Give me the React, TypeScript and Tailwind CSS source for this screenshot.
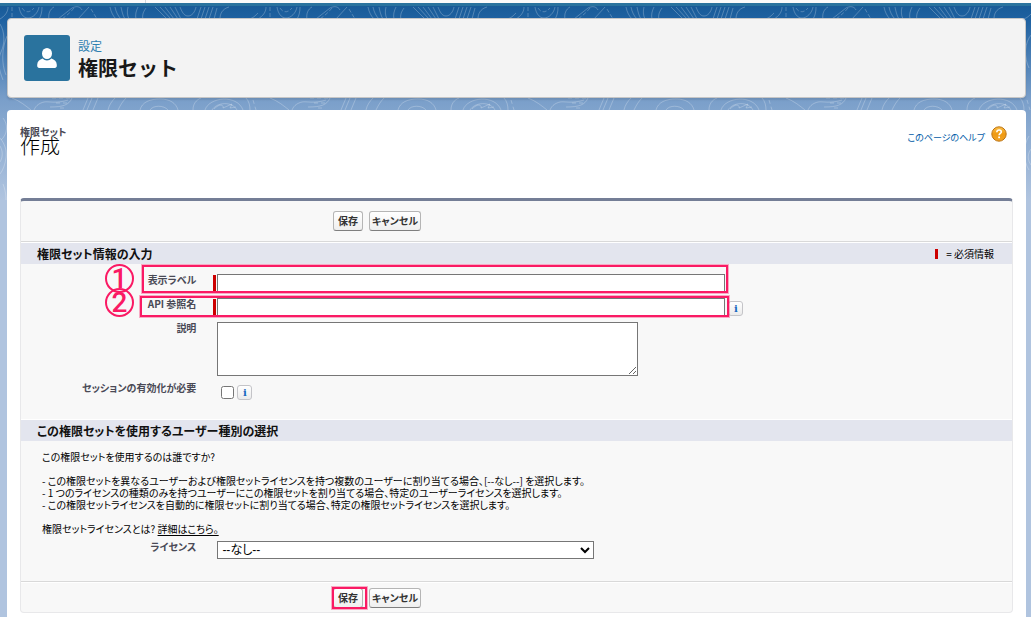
import { useState } from "react";
import type { ReactNode } from "react";
import clsx from "clsx";

const highlight =
  "pointer-events-none absolute border-2 border-[#fa1a64] ring-1 ring-[#fa1a64]/35";

const stepMark =
  "pointer-events-none absolute -top-2 left-[84px] flex h-[29px] w-[29px] items-center justify-center rounded-full border-2 border-[#fa1a64] font-['Roboto',sans-serif] text-[28px] leading-6 font-medium text-[#fa1a64]";

function Topography() {
  return (
    <svg
      className="absolute inset-0 h-full w-full"
      aria-hidden="true"
      fill="none"
    >
      <defs>
        <pattern
          id="topo"
          width="258"
          height="240"
          patternUnits="userSpaceOnUse"
        >
          <g stroke="#fff" strokeOpacity="0.24" strokeWidth="1" fill="none">
            <path d="M8 1C8 6 5 10 0 13M42 1c0 5-1 9-3 12M19 1c1 6 4 11 9 11s10-5 11-11M54 1c-4 2-6 7-5 12" />
            <path
              d="M12 1v12M22 2c3 5 8 5 12 0M74 2c-4 5-8 8-12 11M91 3l6 10"
              strokeDasharray="4 2"
            />
            <path d="M58 13 72 2c4-2 8-2 10 2M78 13 89 1M110 1c1 5 3 9 6 12M115 1c1 5 3 9 6 12M121 1c1 5 2 9 4 12M128 1c-1 4-1 8 1 12M138 1c-2 4-3 8-2 12M146 2c-3 4-4 8-3 11" />
            <path d="M155 1l12 12M160 1l11 12M165 1l9 12M170 1l8 12M175 1l6 12M180 1c2 5 4 9 8 9s7-4 8-9M201 1l-4 12M205 1l-4 12M209 1l-4 12M213 1l-4 12M217 2l-3 11M229 1c-7 2-9 7-9 12M258 7c-4 4-6 6-11 6" />
            <path d="M0 18c5 8 5 20 1 28-4 9-2 18 2 28M7 30c-5 12-6 27-1 39M3 112c5 6 5 16-2 22" />
            <path d="M12 92c8 3 14 8 19 12M34 104c2-5 6-7 10-8s12 2 24-2M72 92c-3 7-9 9-22 9M88 92l-5 12M92 92l-5 12M98 92l-5 12M115 92c-3 3-6 7-7 12M126 92c-4 4-6 8-8 12" />
            <path d="M140 104c2-8 10-11 20-11s16 4 18 11M150 104c3-5 14-5 18 0M193 104c0-6 3-10 8-12M205 104c4-13 32-16 38 0M212 104c5-8 20-9 25 0M214 103c6-6 10-4 9-1l9-4-2 4 6-1M246 92c3 3 4 8 4 12" />
            <path
              d="M52 92h19M56 97h13M60 102h6M253 94l3 10"
              strokeDasharray="4 3"
            />
            <path d="M0 132c5 6 7 13 6 20s-3 12-6 16M0 140c3 5 3 11 0 16M3 178c3 8 4 16 2 24" />
            <path d="M258 28c-8 8-8 24-3 34M255 130c-6 9-6 25 0 34M258 142c-5 5-5 13 0 18" />
          </g>
        </pattern>
      </defs>
      <rect width="100%" height="194" fill="url(#topo)" />
    </svg>
  );
}

function UserIcon() {
  return (
    <svg viewBox="0 0 46 46" className="h-[46px] w-[46px]" aria-hidden="true">
      <rect width="46" height="46" rx="3" fill="#2a739e" />
      <ellipse cx="23" cy="18.500" rx="5" ry="5.600" fill="#fff" />
      <path
        fill="#fff"
        d="M18.600 23.600c1.200 1.300 2.700 2 4.400 2s3.200-.7 4.400-2c3 1 5.400 3 5.400 6.100v1.100c0 1.300-.8 2.100-2 2.100H15.200c-1.200 0-2-.8-2-2.100v-1.100c0-3.100 2.400-5.100 5.400-6.100z"
      />
    </svg>
  );
}

function HelpIcon() {
  return (
    <svg viewBox="0 0 16 16" className="h-4 w-4" aria-hidden="true">
      <defs>
        <linearGradient id="help" x1="0" y1="0" x2="0" y2="1">
          <stop offset="0" stopColor="#fbc04a" />
          <stop offset="0.5" stopColor="#ef9a12" />
          <stop offset="1" stopColor="#f3a426" />
        </linearGradient>
      </defs>
      <circle cx="8" cy="8" r="7.200" fill="url(#help)" stroke="#bd7413" />
      <path
        d="M5.800 6.200C5.900 4.700 6.900 4 8.100 4c1.300 0 2.200.8 2.200 1.900 0 1.500-2.200 1.700-2.200 3.400"
        fill="none"
        stroke="#fff"
        strokeWidth="1.600"
      />
      <rect x="7.200" y="10.500" width="1.800" height="1.700" fill="#fff" />
    </svg>
  );
}

function InfoButton({ className }: { className?: string }) {
  return (
    <button
      type="button"
      className={clsx(
        "flex h-[15px] w-[15px] items-center justify-center rounded-[3px] border border-[#c4c4c8] bg-linear-to-b from-white to-[#ebebeb] font-['DejaVu_Serif',serif] text-[10px] leading-none font-bold text-[#1769c0]",
        className
      )}
    >
      i
    </button>
  );
}

function FormButton({ children }: { children: ReactNode }) {
  return (
    <button
      type="button"
      className="h-5 min-w-[30px] rounded-[3px] border border-[#b5b5b5] border-b-[#7f7f7f] bg-linear-to-b from-white to-[#efefef] px-0.5 text-[10px] leading-4 font-bold text-[#333]"
    >
      {children}
    </button>
  );
}

function SectionHeader({
  title,
  children,
}: {
  title: string;
  children?: ReactNode;
}) {
  return (
    <div className="flex h-[22px] items-center justify-between border-t border-white bg-[#e3e5ee] pr-[18px] pl-4">
      <h3 className="text-[12px] leading-4 font-bold text-[#111]">{title}</h3>
      {children}
    </div>
  );
}

function FormRow({
  id,
  label,
  className,
  children,
}: {
  id: string;
  label: string;
  className?: string;
  children: ReactNode;
}) {
  return (
    <div className={clsx("relative flex", className)}>
      <label
        htmlFor={id}
        className="w-[18%] shrink-0 pr-[3px] text-right text-[10px] leading-4 font-bold text-[#4a4a56]"
      >
        {label}
      </label>
      <div className="flex flex-1 items-start pt-0.5 pl-[14px]">{children}</div>
    </div>
  );
}

export default function App() {
  const [label, setLabel] = useState("");
  const [apiName, setApiName] = useState("");
  const [description, setDescription] = useState("");
  const [session, setSession] = useState(false);

  return (
    <div className="flex min-h-screen flex-col font-['Noto_Sans_CJK_JP',sans-serif] text-black">
      <div className="h-[3px] bg-[#fafafa]">
        <div className="h-full w-[146px] border-r border-gray-300"></div>
      </div>
      <div className="h-[3px] bg-[#2a739e]"></div>

      <div className="relative flex flex-1 flex-col bg-[#b0c4df] bg-[linear-gradient(#195b98_0px,#1f62a2_15px,#7a9fca_94px,#b0c4df_194px)] pt-3 pr-[5px] pl-[7px]">
        <Topography />
        <header className="relative flex h-20 items-center gap-2 rounded border border-[#c6c6c6] bg-[#f3f3f3] px-4 shadow-[0_2px_2px_rgba(0,0,0,0.1)]">
          <UserIcon />
          <div>
            <p className="text-[12px] leading-5 text-[#2e80b0]">設定</p>
            <h1 className="text-[20px] leading-6 font-bold text-[#181818]">
              権限セット
            </h1>
          </div>
        </header>

        <main className="relative mt-3 flex-1 rounded-t bg-white px-[13px] pt-4 pb-1 [font-feature-settings:'palt']">
          <div className="mb-11 flex items-start justify-between pr-1.5">
            <div>
              <p className="text-[10px] leading-3 font-bold text-[#4a4a56]">
                権限セット
              </p>
              <h2 className="text-[20px] leading-4 font-light">作成</h2>
            </div>
            <a
              href="#help"
              className="flex items-start gap-1.5 text-[9px] text-[#015ba7]"
            >
              <span className="pt-1 leading-4">このページのヘルプ</span>
              <HelpIcon />
            </a>
          </div>

          <form className="rounded border border-t-[3px] border-[#e8e8ea] border-t-[#747e96] bg-[#f8f8f8]">
            <div className="flex gap-1.5 border-b border-[#d9d9d9] py-2.5 pl-[312px]">
              <FormButton>保存</FormButton>
              <FormButton>キャンセル</FormButton>
            </div>

            <SectionHeader title="権限セット情報の入力">
              <p className="flex items-center gap-2 text-[10px] leading-4">
                <span className="h-2.5 w-[3px] bg-[#c00]"></span>= 必須情報
              </p>
            </SectionHeader>

            <div className="pt-2">
              <FormRow id="label" label="表示ラベル" className="h-6">
                <span className="mt-px mr-px h-4 w-[3px] bg-[#c00]"></span>
                <input
                  id="label"
                  type="text"
                  value={label}
                  onChange={(e) => setLabel(e.target.value)}
                  className="h-[18px] w-[508px] border border-[#767676] bg-white px-1 text-[12px]"
                />
                <span
                  className={clsx(
                    highlight,
                    "-top-[7px] left-[121px] h-[28px] w-[586px]"
                  )}
                ></span>
                <span className={stepMark}>1</span>
              </FormRow>
              <FormRow id="api" label="API 参照名" className="h-6">
                <span className="mt-px mr-px h-4 w-[3px] bg-[#c00]"></span>
                <input
                  id="api"
                  type="text"
                  value={apiName}
                  onChange={(e) => setApiName(e.target.value)}
                  className="h-[18px] w-[508px] border border-[#767676] bg-white px-1 text-[12px]"
                />
                <InfoButton className="mt-[3px] ml-[3px]" />
                <span
                  className={clsx(
                    highlight,
                    "top-0 left-[119px] h-[21px] w-[589px]"
                  )}
                ></span>
                <span className={stepMark}>2</span>
              </FormRow>
              <FormRow id="description" label="説明" className="h-[60px]">
                <textarea
                  id="description"
                  value={description}
                  onChange={(e) => setDescription(e.target.value)}
                  className="ml-1 h-[54px] w-[421px] border border-[#767676] bg-white px-1 text-[12px]"
                />
              </FormRow>
              <FormRow
                id="session"
                label="セッションの有効化が必要"
                className="h-[39px]"
              >
                <input
                  id="session"
                  type="checkbox"
                  checked={session}
                  onChange={(e) => setSession(e.target.checked)}
                  className="mt-1 ml-2 h-[13px] w-[13px]"
                />
                <InfoButton className="mt-[3px] ml-[3px]" />
              </FormRow>
            </div>

            <SectionHeader title="この権限セットを使用するユーザー種別の選択" />

            <div className="pt-2.5 pl-[21px] text-[10px] leading-3">
              <p>この権限セットを使用するのは誰ですか?</p>
              <ul className="py-3">
                <li>
                  - この権限セットを異なるユーザーおよび権限セットライセンスを持つ複数のユーザーに割り当てる場合、[--なし--]
                  を選択します。
                </li>
                <li>
                  - 1 つのライセンスの種類のみを持つユーザーにこの権限セットを割り当てる場合、特定のユーザーライセンスを選択します。
                </li>
                <li>
                  - この権限セットライセンスを自動的に権限セットに割り当てる場合、特定の権限セットライセンスを選択します。
                </li>
              </ul>
              <p>
                権限セットライセンスとは?{" "}
                <a href="#license" className="underline underline-offset-2">
                  詳細はこちら。
                </a>
              </p>
            </div>

            <FormRow id="license" label="ライセンス" className="mt-1 h-[42px]">
              <select
                id="license"
                className="ml-1 h-[18px] w-[377px] border border-[#767676] bg-white font-['Liberation_Sans','Noto_Sans_CJK_JP',sans-serif] text-[12px]"
              >
                <option>--なし--</option>
              </select>
            </FormRow>

            <div className="border-t border-[#d9d9d9]">
              <div className="relative flex gap-1.5 border-t border-white pt-[5px] pb-1 pl-[312px]">
                <FormButton>保存</FormButton>
                <FormButton>キャンセル</FormButton>
                <span
                  className={clsx(
                    highlight,
                    "top-1 left-[311px] h-[22px] w-[35px]"
                  )}
                ></span>
              </div>
            </div>
          </form>
        </main>
      </div>
    </div>
  );
}
